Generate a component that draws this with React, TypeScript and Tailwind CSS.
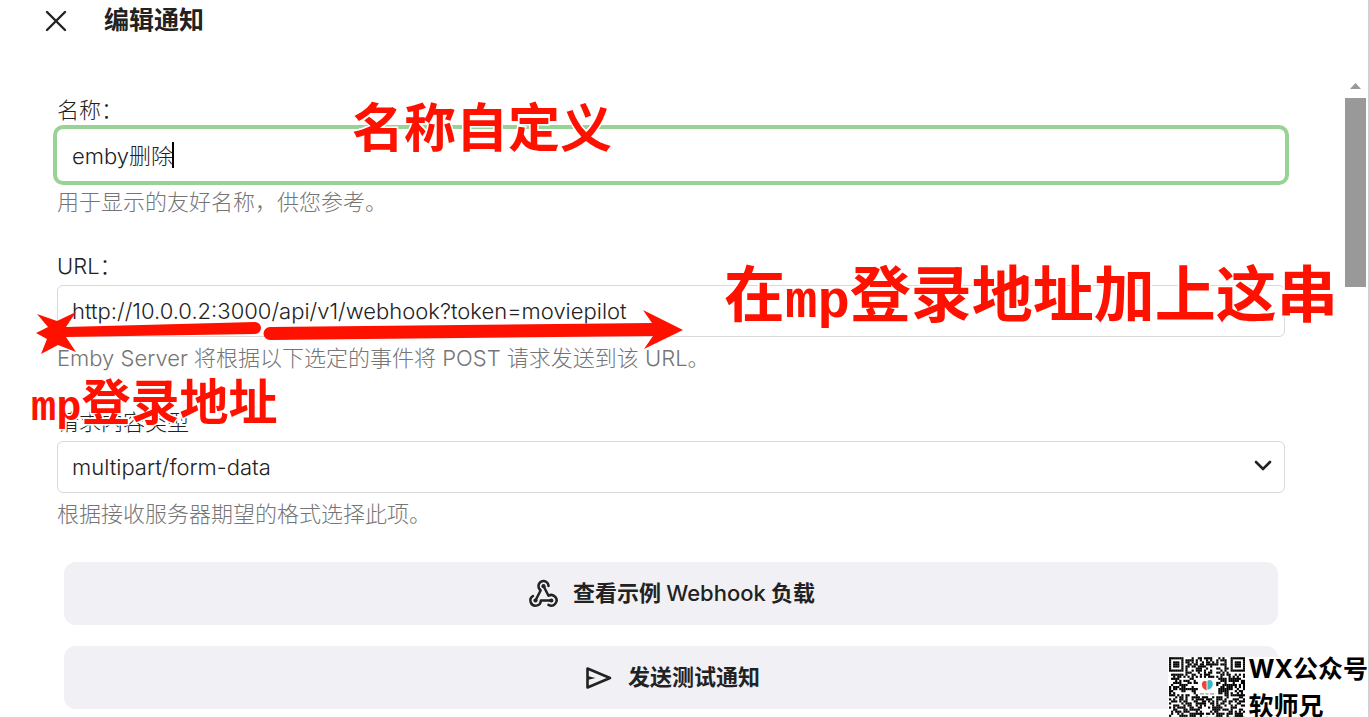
import { useState } from "react";
import type { ReactNode } from "react";

const CONTROL =
  "block h-[52px] w-full appearance-none rounded-md border bg-white px-[14px] text-[22px] text-[#222] outline-none";

const MARK =
  "pointer-events-none absolute whitespace-nowrap font-bold text-[#ff1100] [-webkit-text-stroke:3px_white] [paint-order:stroke_fill]";

const QR_SIZE = 37;

// true when the module at x,y of the code is black
function isDark(x: number, y: number) {
  const corners = [
    [0, 0],
    [QR_SIZE - 7, 0],
    [0, QR_SIZE - 7],
  ];
  for (const [cx, cy] of corners) {
    const dx = x - cx;
    const dy = y - cy;
    if (dx >= -1 && dx <= 7 && dy >= -1 && dy <= 7) {
      const ring = Math.max(Math.abs(dx - 3), Math.abs(dy - 3));
      return ring === 3 || ring <= 1;
    }
  }
  if (Math.abs(x - 18) < 5 && Math.abs(y - 14) < 5) return false;
  const n = Math.sin(x * 127.1 + y * 311.7) * 43758.5453;
  return n - Math.floor(n) > 0.47;
}

function QrCode() {
  const cells: ReactNode[] = [];
  for (let y = 0; y < QR_SIZE; y++) {
    for (let x = 0; x < QR_SIZE; x++) {
      if (isDark(x, y)) {
        cells.push(<rect key={`${x}-${y}`} x={x} y={y} width="1.05" height="1.05" />);
      }
    }
  }
  return (
    <svg viewBox="0 0 37 29" className="h-[60px] w-[76px] shrink-0" aria-hidden="true">
      {cells}
      <path d="M18.300 11.800c-1.500-.6-2.300.2-2.300 1.500s.9 2.500 2.300 2.900z" fill="#e8453c" />
      <path d="M18.700 11.400c1.500-.8 2.600 0 2.600 1.500s-1 2.700-2.600 3z" fill="#35b8c4" />
      <path d="M15 17.800h2M17.800 17.800h1.400M20 17.800h2" stroke="#999" strokeWidth="0.600" />
    </svg>
  );
}

function WebhookIcon() {
  return (
    <svg
      viewBox="0 0 32 32"
      className="size-8"
      fill="none"
      stroke="currentColor"
      strokeWidth="2.500"
      strokeLinecap="round"
      strokeLinejoin="round"
      aria-hidden="true"
    >
      <path d="M21.500 8a5 5 0 1 0-7.800 4.200L8.500 22.500" />
      <path d="M16.500 8l5 9.800a5.300 5.300 0 1 1 0 9.100" />
      <path d="M6 18a5.200 5.200 0 1 0 7.800 4.500h10.700" />
      <g fill="currentColor" stroke="none">
        <circle cx="16.500" cy="8.200" r="2.100" />
        <circle cx="8.500" cy="22.500" r="2.100" />
        <circle cx="24.300" cy="22.500" r="2.100" />
      </g>
    </svg>
  );
}

function SendIcon() {
  return (
    <svg
      viewBox="0 0 32 32"
      className="size-8"
      fill="none"
      stroke="currentColor"
      strokeWidth="2.600"
      strokeLinejoin="round"
      strokeLinecap="round"
      aria-hidden="true"
    >
      <path d="M5.500 6.500v19L28 16z" />
      <path d="M5.500 14l8 2-8 2z" fill="currentColor" stroke="none" />
    </svg>
  );
}

type FieldProps = {
  id: string;
  label: string;
  hint: string;
  children: ReactNode;
};

function Field({ id, label, hint, children }: FieldProps) {
  return (
    <div className="relative">
      <label htmlFor={id} className="mb-1 block leading-[30px]">
        {label}
      </label>
      {children}
      <p className="mt-[6px] leading-[30px] text-[#757575]">{hint}</p>
    </div>
  );
}

function ActionButton({ icon, children }: { icon: ReactNode; children: ReactNode }) {
  return (
    <button
      type="button"
      className="flex h-[63px] w-full items-center justify-center gap-[14px] rounded-xl bg-[#f1f0f5] font-bold"
    >
      {icon}
      <span>{children}</span>
    </button>
  );
}

export default function App() {
  const [name, setName] = useState("emby删除");
  const [url, setUrl] = useState("http://10.0.0.2:3000/api/v1/webhook?token=moviepilot");

  return (
    <div className="relative flex h-screen flex-col overflow-hidden border-r border-[#d0d0d0] bg-white font-['Inter','Noto_Sans_CJK_SC',sans-serif] text-[22px] font-light text-[#222]">
      <header className="flex h-[42px] shrink-0 items-center gap-[36px] pl-[44px]">
        <button type="button" aria-label="关闭">
          <svg
            viewBox="0 0 24 24"
            className="size-6"
            stroke="currentColor"
            strokeWidth="2.400"
            strokeLinecap="round"
            aria-hidden="true"
          >
            <path d="M3 3l18 18M21 3L3 21" />
          </svg>
        </button>
        <h1 className="text-[25px] font-bold">编辑通知</h1>
      </header>

      <div className="flex min-h-0 flex-1">
        <form className="min-w-0 flex-1 pt-[53px] pr-[60px] pl-[57px]">
          <div className="flex flex-col gap-[34px]">
            <Field id="name" label="名称：" hint="用于显示的友好名称，供您参考。">
              <div className="relative">
                <input
                  id="name"
                  type="text"
                  value={name}
                  onChange={(e) => setName(e.target.value)}
                  className={`${CONTROL} border-transparent pb-[3px] ring-4 ring-[#98d294]`}
                />
                {/* caret */}
                <span className="absolute top-[13px] left-[115px] h-[26px] w-[2px] bg-black" />
              </div>
              <span className={`${MARK} -top-[2px] left-[295px] text-[52px] leading-[72px]`}>
                名称自定义
              </span>
            </Field>

            <Field
              id="url"
              label="URL："
              hint="Emby Server 将根据以下选定的事件将 POST 请求发送到该 URL。"
            >
              <input
                id="url"
                type="text"
                value={url}
                onChange={(e) => setUrl(e.target.value)}
                className={`${CONTROL} border-[#d9d9d9]`}
              />
              <span className={`${MARK} top-1 left-[667px] text-[61px] leading-[80px]`}>
                在
                <span className="font-['Liberation_Mono','Noto_Sans_CJK_SC',monospace] text-[54px]">
                  mp
                </span>
                登录地址加上这串
              </span>
              <svg
                viewBox="0 0 660 60"
                className="pointer-events-none absolute top-[50px] -left-[27px] h-[60px] w-[660px]"
                fill="#ff1100"
                aria-hidden="true"
              >
                <path d="M7 13l20 7 19-9-10 15 189-5a6 6 0 0 1 0 12L36 36l10 15-18-7-17 9 6-15-11-6 12-6z" />
                <path d="M240 26l382-4-9-13 40 20-39 19 9-13-383 4a6 6 0 0 1 0-13z" />
              </svg>
            </Field>

            <Field id="type" label="请求内容类型" hint="根据接收服务器期望的格式选择此项。">
              <div className="relative">
                <select id="type" className={`${CONTROL} border-[#d9d9d9]`}>
                  <option>multipart/form-data</option>
                  <option>application/json</option>
                </select>
                <svg
                  viewBox="0 0 20 12"
                  className="pointer-events-none absolute top-[19px] right-[12px] h-3 w-5"
                  fill="none"
                  stroke="#222"
                  strokeWidth="2.600"
                  strokeLinecap="round"
                  aria-hidden="true"
                >
                  <path d="M3 2l7 7 7-7" />
                </svg>
              </div>
              <span className={`${MARK} -top-10 -left-[26px] text-[49px] leading-[72px]`}>
                <span className="font-['Liberation_Mono','Noto_Sans_CJK_SC',monospace] text-[42px]">
                  mp
                </span>
                登录地址
              </span>
            </Field>
          </div>

          <div className="mt-[33px] flex flex-col gap-[21px] px-[7px]">
            <ActionButton icon={<WebhookIcon />}>
              查看示例 <span className="font-medium">Webhook</span> 负载
            </ActionButton>
            <ActionButton icon={<SendIcon />}>发送测试通知</ActionButton>
          </div>
        </form>

        {/* scrollbar */}
        <div className="mr-[2px] flex w-[21px] flex-col items-center pt-[41px]">
          <svg viewBox="0 0 11 6" className="h-[6px] w-[11px]" fill="#999" aria-hidden="true">
            <path d="M0 6l5.500-6L11 6z" />
          </svg>
          <div className="mt-[9px] h-[189px] w-full bg-[#999]" />
        </div>
      </div>

      {/* watermark */}
      <div className="absolute right-0 bottom-0 flex h-[60px] gap-[4px] bg-white pl-px text-[25px] leading-[24px] font-bold whitespace-nowrap text-black">
        <QrCode />
        <div className="flex flex-col gap-[13px]">
          <p>WX公众号</p>
          <p>软师兄</p>
        </div>
      </div>
    </div>
  );
}
